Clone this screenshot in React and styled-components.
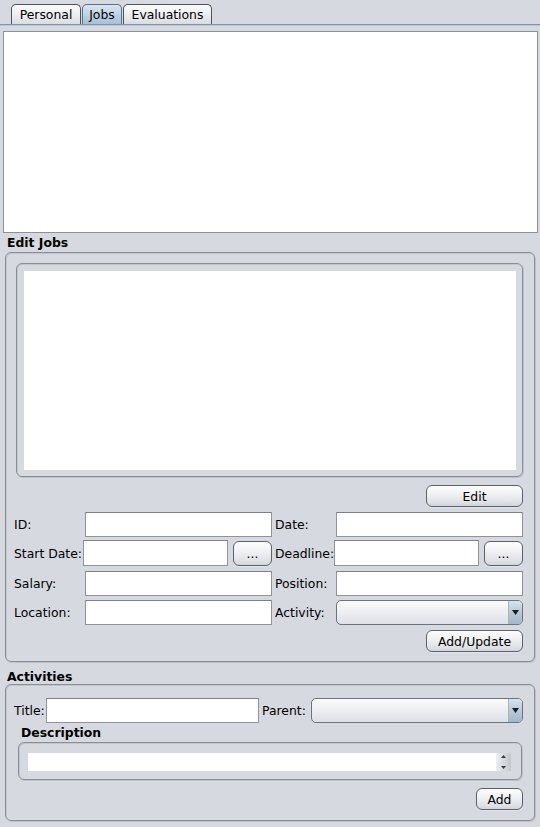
import React from 'react';
import styled, { createGlobalStyle } from 'styled-components';

const Global = createGlobalStyle`
  html, body { margin: 0; padding: 0; background: #d6d9df; }
  body { width: 540px; height: 827px; overflow: hidden; font-family: "DejaVu Sans", "Liberation Sans", sans-serif; font-size: 12.4px; color: #000; }
  * { box-sizing: border-box; }
`;

const Page = styled.div`
  width: 540px;
  height: 827px;
  display: flex;
  flex-direction: column;
  background: #d6d9df;
`;

const TabStrip = styled.div`
  display: flex;
  align-items: flex-end;
  height: 25px;
  padding: 4px 0 0 11px;
  border-bottom: 1px solid #7f95ae;
  box-shadow: 0 1px 0 #b9c8d7;
`;

const Tab = styled.div`
  width: ${p => p.$w}px;
  height: 20px;
  margin-right: 1px;
  display: flex;
  align-items: center;
  justify-content: center;
  border: 1px solid ${p => (p.$active ? '#56728f' : '#4d535a')};
  border-bottom: none;
  border-radius: 5px 5px 0 0;
  background: ${p =>
    p.$active
      ? 'linear-gradient(#dbe6f0, #bfd1e3 50%, #a9c0d7)'
      : 'linear-gradient(#fbfbfc, #eceef1 50%, #d9dce1)'};
  font-size: 12.4px;
`;

const TopList = styled.div`
  margin: 6px 2px 0 3px;
  height: 202px;
  background: #fff;
  border: 1px solid #8d929a;
`;

const SectionTitle = styled.div`
  height: ${p => p.$h}px;
  padding: ${p => p.$pt}px 0 0 7px;
  line-height: 14px;
  font-weight: bold;
  font-size: 12.4px;
`;

const GroupBox = styled.div`
  margin: 0 5px;
  height: ${p => p.$h}px;
  padding: ${p => p.$pt}px 11px 9px 8px;
  border: 1px solid #8a8f97;
  border-radius: 6px;
  box-shadow: inset 1px 1px 0 #c3c7cd, 1px 1px 0 #bec2c8;
  display: flex;
  flex-direction: column;
`;

const ScrollBox = styled.div`
  margin-left: 2px;
  height: 214px;
  padding: 7px 6px 6px 7px;
  border: 1px solid #8a8f97;
  border-radius: 6px;
  box-shadow: inset 1px 1px 0 #c3c7cd, 1px 1px 0 #bec2c8;
  display: flex;
`;

const Viewport = styled.div`
  flex: 1;
  background: #fff;
`;

const ButtonRow = styled.div`
  display: flex;
  justify-content: flex-end;
  margin-top: ${p => p.$mt}px;
`;

const Button = styled.button`
  width: ${p => p.$w}px;
  height: ${p => p.$h || 22}px;
  padding: 0;
  border: 1px solid #5c626a;
  border-radius: 6px;
  background: linear-gradient(#fdfdfd 0%, #f0f1f3 40%, #dfe2e6 80%, #d2d6dc 100%);
  box-shadow: 0 1px 0 #e4e7ea;
  font-family: "DejaVu Sans", sans-serif;
  font-size: 12.4px;
  color: #000;
  display: flex;
  align-items: center;
  justify-content: center;
  flex-shrink: 0;
`;

const FormRow = styled.div`
  display: grid;
  grid-template-columns: ${p => p.$cols};
  align-items: center;
  height: ${p => p.$h || 25}px;
  margin-top: ${p => p.$mt}px;
`;

const Label = styled.div`
  padding-left: ${p => p.$indent || 0}px;
  white-space: nowrap;
  font-size: 12.4px;
`;

const TextField = styled.div`
  height: ${p => p.$h || 25}px;
  background: #fff;
  border: 1px solid #8f949b;
  border-top-color: #7d828a;
  flex: 1;
`;

const DateCell = styled.div`
  margin-left: -2px;
  display: flex;
  align-items: center;
  gap: 5px;
  height: 26px;
`;

const Combo = styled.div`
  height: 25px;
  border: 1px solid #6c737c;
  border-radius: 5px;
  background: linear-gradient(#fbfbfc, #eceef1 50%, #dde0e5);
  display: flex;
  justify-content: flex-end;
  overflow: hidden;
`;

const ComboArrow = styled.div`
  width: 14px;
  border-left: 1px solid #a7b3c0;
  background: linear-gradient(#d9e3ec, #b9c9d9 50%, #a3b7cb);
  display: flex;
  align-items: center;
  justify-content: center;
`;

const DescLabel = styled.div`
  margin: 3px 0 0 7px;
  line-height: 14px;
  font-weight: bold;
  font-size: 12.4px;
`;

const DescBox = styled.div`
  margin: 2px 1px 0 4px;
  height: 38px;
  padding: 10px 10px 8px 9px;
  border: 1px solid #8a8f97;
  border-radius: 6px;
  box-shadow: inset 1px 1px 0 #c3c7cd, 1px 1px 0 #bec2c8;
  display: flex;
`;

const DescArea = styled.div`
  flex: 1;
  height: 18px;
  background: #fff;
`;

const Spinner = styled.div`
  width: 15px;
  height: 18px;
  background: linear-gradient(90deg, #eceef0, #c4c8ce);
  display: flex;
  flex-direction: column;
  justify-content: space-between;
  align-items: center;
  padding: 2px 0;
`;

const DownTriangle = ({ w = 7, h = 5 }) => (
  <svg width={w} height={h} viewBox="0 0 7 5">
    <path d="M0 0 L7 0 L3.5 5 Z" fill="#1b1d20" />
  </svg>
);

const UpTiny = () => (
  <svg width="5" height="3" viewBox="0 0 5 3">
    <path d="M0 3 L5 3 L2.5 0 Z" fill="#3a3d42" />
  </svg>
);

const DownTiny = () => (
  <svg width="5" height="3" viewBox="0 0 5 3">
    <path d="M0 0 L5 0 L2.5 3 Z" fill="#3a3d42" />
  </svg>
);

const ComboBox = () => (
  <Combo>
    <ComboArrow>
      <DownTriangle />
    </ComboArrow>
  </Combo>
);

const jobCols = '71px 187px 64px 187px';

export default function App() {
  return (
    <>
      <Global />
      <Page>
        <TabStrip>
          <Tab $w={70}>Personal</Tab>
          <Tab $w={40} $active>Jobs</Tab>
          <Tab $w={89}>Evaluations</Tab>
        </TabStrip>
        <TopList />
        <SectionTitle $h={19} $pt={3}>Edit Jobs</SectionTitle>
        <GroupBox $h={410} $pt={10}>
          <ScrollBox>
            <Viewport />
          </ScrollBox>
          <ButtonRow $mt={8}>
            <Button $w={97}>Edit</Button>
          </ButtonRow>
          <FormRow $cols={jobCols} $mt={5}>
            <Label>ID:</Label>
            <TextField />
            <Label $indent={3}>Date:</Label>
            <TextField />
          </FormRow>
          <FormRow $cols={jobCols} $mt={3} $h={26}>
            <Label>Start Date:</Label>
            <DateCell>
              <TextField $h={26} />
              <Button $w={39} $h={25}>...</Button>
            </DateCell>
            <Label $indent={3}>Deadline:</Label>
            <DateCell>
              <TextField $h={26} />
              <Button $w={39} $h={25}>...</Button>
            </DateCell>
          </FormRow>
          <FormRow $cols={jobCols} $mt={5}>
            <Label>Salary:</Label>
            <TextField />
            <Label $indent={3}>Position:</Label>
            <TextField />
          </FormRow>
          <FormRow $cols={jobCols} $mt={4}>
            <Label>Location:</Label>
            <TextField />
            <Label $indent={3}>Activity:</Label>
            <ComboBox />
          </FormRow>
          <ButtonRow $mt={5}>
            <Button $w={97}>Add/Update</Button>
          </ButtonRow>
        </GroupBox>
        <SectionTitle $h={22} $pt={8}>Activities</SectionTitle>
        <GroupBox $h={137} $pt={13}>
          <FormRow $cols="32px 213px 52px 212px" $mt={0}>
            <Label>Title:</Label>
            <TextField />
            <Label $indent={3}>Parent:</Label>
            <ComboBox />
          </FormRow>
          <DescLabel>Description</DescLabel>
          <DescBox>
            <DescArea />
            <Spinner>
              <UpTiny />
              <DownTiny />
            </Spinner>
          </DescBox>
          <ButtonRow $mt={8}>
            <Button $w={47}>Add</Button>
          </ButtonRow>
        </GroupBox>
      </Page>
    </>
  );
}
